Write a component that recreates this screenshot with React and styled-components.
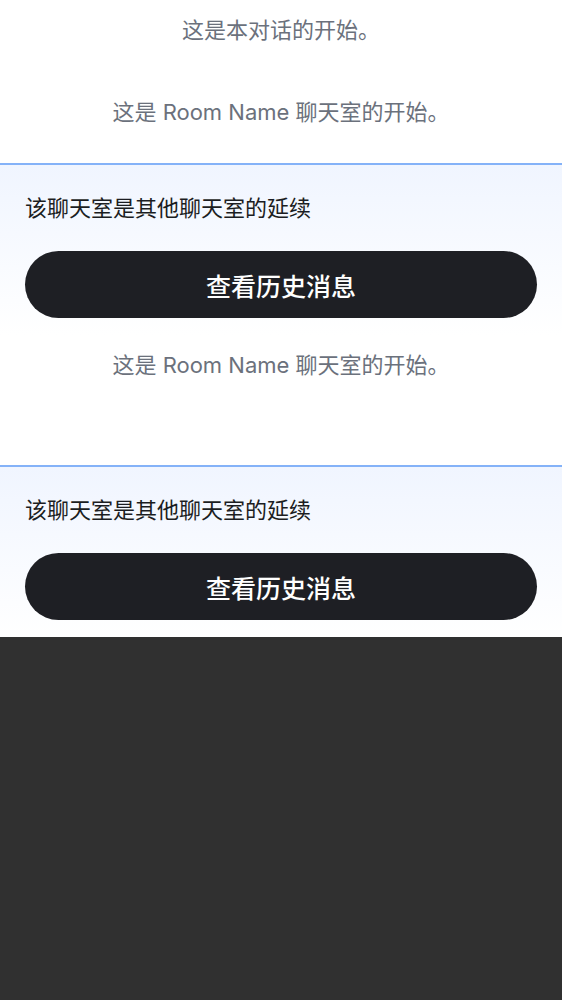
import React from "react";
import styled, { createGlobalStyle } from "styled-components";

const Global = createGlobalStyle`
  html, body { margin: 0; padding: 0; background: #303030; }
  body { font-family: "Inter", "Noto Sans CJK SC", sans-serif; }
`;

const Timeline = styled.div`
  background: #ffffff;
  display: flex;
  flex-direction: column;
`;

const Notice = styled.div`
  text-align: center;
  color: #6b717c;
  font-size: 22px;
  line-height: 28px;
  margin-top: ${(p) => p.$top || 0}px;
  margin-bottom: ${(p) => p.$bottom || 0}px;
`;

const Panel = styled.section`
  border-top: 2px solid #84b2f8;
  background: linear-gradient(180deg, #f0f5ff 0%, #ffffff 100%);
  padding: 29px 25px 17px;
  display: flex;
  flex-direction: column;
  gap: 29px;
`;

const PanelText = styled.div`
  color: #1b1d22;
  font-size: 22px;
  line-height: 28px;
`;

const HistoryButton = styled.button`
  height: 67px;
  border: none;
  border-radius: 34px;
  background: #1e1f24;
  color: #ffffff;
  font-family: inherit;
  font-size: 25px;
  font-weight: 500;
  cursor: pointer;
`;

const Continuation = () => (
  <Panel>
    <PanelText>该聊天室是其他聊天室的延续</PanelText>
    <HistoryButton>查看历史消息</HistoryButton>
  </Panel>
);

export default function App() {
  return (
    <>
      <Global />
      <Timeline>
        <Notice $top={16}>这是本对话的开始。</Notice>
        <Notice $top={54} $bottom={37}>这是 Room Name 聊天室的开始。</Notice>
        <Continuation />
        <Notice $top={16} $bottom={86}>这是 Room Name 聊天室的开始。</Notice>
        <Continuation />
      </Timeline>
    </>
  );
}
